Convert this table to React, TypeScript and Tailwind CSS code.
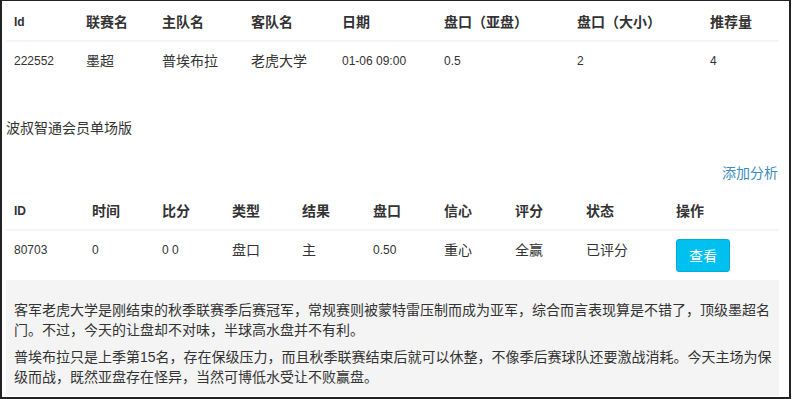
import React from "react";

const FONT = { fontFamily: '"Liberation Sans", "Noto Sans CJK SC", sans-serif' };

const t1Cols = "grid-cols-[72px_76px_89px_91px_102px_133px_133px_77px]";
const t2Cols = "grid-cols-[78px_70px_70px_70px_71px_71px_71px_71px_90px_111px]";

type C = { t: string; latin?: boolean };

const t1Head: C[] = [
  { t: "Id", latin: true },
  { t: "联赛名" },
  { t: "主队名" },
  { t: "客队名" },
  { t: "日期" },
  { t: "盘口（亚盘）" },
  { t: "盘口（大小）" },
  { t: "推荐量" },
];
const t1Row: C[] = [
  { t: "222552", latin: true },
  { t: "墨超" },
  { t: "普埃布拉" },
  { t: "老虎大学" },
  { t: "01-06 09:00", latin: true },
  { t: "0.5", latin: true },
  { t: "2", latin: true },
  { t: "4", latin: true },
];
const t2Head: C[] = [
  { t: "ID", latin: true },
  { t: "时间" },
  { t: "比分" },
  { t: "类型" },
  { t: "结果" },
  { t: "盘口" },
  { t: "信心" },
  { t: "评分" },
  { t: "状态" },
  { t: "操作" },
];
const t2Row: C[] = [
  { t: "80703", latin: true },
  { t: "0", latin: true },
  { t: "0 0", latin: true },
  { t: "盘口" },
  { t: "主" },
  { t: "0.50", latin: true },
  { t: "重心" },
  { t: "全赢" },
  { t: "已评分" },
];

export default function App() {
  return (
    <div
      className="w-[791px] h-[399px] bg-white border-[#222] border-l-2 border-t border-r-2 border-b-2 pl-[4px] text-[#333] overflow-hidden"
      style={FONT}
    >
      <div className="w-[773px]">
        {/* table 1 */}
        <div className={`grid ${t1Cols} border-b-2 border-[#f4f4f4]`}>
          {t1Head.map((c, i) => (
            <div
              key={i}
              className={`px-2 pt-[11px] pb-[8px] leading-5 font-bold ${c.latin ? "text-[12px]" : "text-[14px]"}`}
            >
              {c.t}
            </div>
          ))}
        </div>
        <div className={`grid ${t1Cols}`}>
          {t1Row.map((c, i) => (
            <div
              key={i}
              className={`px-2 pt-[9px] pb-[8px] leading-5 ${c.latin ? "text-[12px]" : "text-[14px]"}`}
            >
              {c.t}
            </div>
          ))}
        </div>

        <div className="mt-[39px] text-[14px] leading-5">波叔智通会员单场版</div>

        <div className="mt-[25px] text-right text-[14px] leading-5 text-[#3c8dbc] pr-px">
          添加分析
        </div>

        {/* table 2 */}
        <div className={`mt-[11px] grid ${t2Cols} border-b-2 border-[#f4f4f4]`}>
          {t2Head.map((c, i) => (
            <div
              key={i}
              className={`px-2 pt-[7px] pb-[8px] leading-5 font-bold ${c.latin ? "text-[12px]" : "text-[14px]"}`}
            >
              {c.t}
            </div>
          ))}
        </div>
        <div className={`grid ${t2Cols} h-[51px] border-b-2 border-[#f4f4f4]`}>
          {t2Row.map((c, i) => (
            <div
              key={i}
              className={`px-2 pt-[9px] leading-5 ${c.latin ? "text-[12px]" : "text-[14px]"}`}
            >
              {c.t}
            </div>
          ))}
          <div className="px-2 pt-[8px]">
            <button className="w-[54px] h-[33px] bg-[#00c0ef] border border-[#00acd6] rounded-[3px] text-white text-[14px] leading-5">
              查看
            </button>
          </div>
        </div>

        <div className="bg-[#f4f4f4] h-[114px] pl-2 pr-[5px] pt-[18px] text-[14px] leading-5">
          <p className="mb-[7px]">
            客军老虎大学是刚结束的秋季联赛季后赛冠军，常规赛则被蒙特雷压制而成为亚军，综合而言表现算是不错了，顶级墨超名门。不过，今天的让盘却不对味，半球高水盘并不有利。
          </p>
          <p>
            普埃布拉只是上季第15名，存在保级压力，而且秋季联赛结束后就可以休整，不像季后赛球队还要激战消耗。今天主场为保级而战，既然亚盘存在怪异，当然可博低水受让不败赢盘。
          </p>
        </div>
      </div>
    </div>
  );
}
